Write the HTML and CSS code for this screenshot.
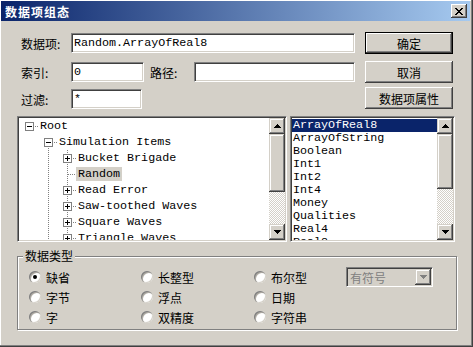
FILE: index.html
```html
<!DOCTYPE html>
<html lang="zh-CN">
<head>
    <meta charset="UTF-8">
    <meta name="viewport" content="width=device-width, initial-scale=1.0">
    <title>数据项组态</title>
    <link rel="stylesheet" href="styles.css">
</head>
<body>
    <div class="window">
        <div class="titlebar">
            <span class="title">数据项组态</span>
            <span class="close-btn">
                <svg width="8" height="7" viewBox="0 0 8 7" shape-rendering="crispEdges"><path d="M0 0h2v1h1v1h2V1h1V0h2v1H7v1H6v1H5v1h1v1h1v1h1v1H6V6H5V5H3v1H2v1H0V6h1V5h1V4h1V3H2V2H1V1H0z" fill="#000"/></svg>
            </span>
        </div>

        <div class="top">
            <div class="fields">
                <div class="row">
                    <span class="lbl">数据项:</span>
                    <div class="edit w-item">Random.ArrayOfReal8</div>
                </div>
                <div class="row row-2">
                    <span class="lbl">索引:</span>
                    <div class="edit w-index">0</div>
                    <span class="lbl lbl-path">路径:</span>
                    <div class="edit w-path"></div>
                </div>
                <div class="row row-3">
                    <span class="lbl">过滤:</span>
                    <div class="edit w-filter">*</div>
                </div>
            </div>
            <div class="buttons">
                <div class="btn default">确定</div>
                <div class="btn btn-2">取消</div>
                <div class="btn btn-3">数据项属性</div>
            </div>
        </div>

        <div class="middle">
            <div class="box tree">
                <div class="tree-items">
                    <div class="node lv1"><span class="exp"></span><span class="dash"></span><span class="text">Root</span></div>
                    <div class="node lv2"><span class="exp"></span><span class="dash"></span><span class="text">Simulation Items</span></div>
                    <div class="node lv3"><span class="exp plus"></span><span class="dash"></span><span class="text">Bucket Brigade</span></div>
                    <div class="node lv3"><span class="leaf"></span><span class="text selected">Random</span></div>
                    <div class="node lv3"><span class="exp plus"></span><span class="dash"></span><span class="text">Read Error</span></div>
                    <div class="node lv3"><span class="exp plus"></span><span class="dash"></span><span class="text">Saw-toothed Waves</span></div>
                    <div class="node lv3"><span class="exp plus"></span><span class="dash"></span><span class="text">Square Waves</span></div>
                    <div class="node lv3"><span class="exp plus"></span><span class="dash"></span><span class="text">Triangle Waves</span></div>
                </div>
                <div class="sbar">
                    <div class="sb-btn"><svg width="7" height="4" viewBox="0 0 7 4" shape-rendering="crispEdges"><path d="M3 0h1v1h1v1h1v1h1v1H0V3h1V2h1V1h1z"/></svg></div>
                    <div class="sb-thumb tree-thumb"></div>
                    <div class="sb-track"></div>
                    <div class="sb-btn"><svg width="7" height="4" viewBox="0 0 7 4" shape-rendering="crispEdges"><path d="M0 0h7v1H6v1H5v1H4v1H3V3H2V2H1V1H0z"/></svg></div>
                </div>
            </div>

            <div class="box list">
                <div class="list-items">
                    <div class="item selected">ArrayOfReal8</div>
                    <div class="item">ArrayOfString</div>
                    <div class="item">Boolean</div>
                    <div class="item">Int1</div>
                    <div class="item">Int2</div>
                    <div class="item">Int4</div>
                    <div class="item">Money</div>
                    <div class="item">Qualities</div>
                    <div class="item">Real4</div>
                    <div class="item">Real8</div>
                </div>
                <div class="sbar">
                    <div class="sb-btn"><svg width="7" height="4" viewBox="0 0 7 4" shape-rendering="crispEdges"><path d="M3 0h1v1h1v1h1v1h1v1H0V3h1V2h1V1h1z"/></svg></div>
                    <div class="sb-thumb list-thumb"></div>
                    <div class="sb-track"></div>
                    <div class="sb-btn"><svg width="7" height="4" viewBox="0 0 7 4" shape-rendering="crispEdges"><path d="M0 0h7v1H6v1H5v1H4v1H3V3H2V2H1V1H0z"/></svg></div>
                </div>
            </div>
        </div>

        <fieldset class="group">
            <legend>数据类型</legend>
            <div class="options">
                <div class="opt"><span class="radio checked"></span>缺省</div>
                <div class="opt"><span class="radio"></span>长整型</div>
                <div class="opt"><span class="radio"></span>布尔型</div>
                <div class="combo">
                    <span class="combo-text">有符号</span>
                    <span class="combo-btn"><svg width="7" height="4" viewBox="0 0 7 4" shape-rendering="crispEdges"><path d="M0 0h7v1H6v1H5v1H4v1H3V3H2V2H1V1H0z" fill="#808080"/></svg></span>
                </div>
                <div class="opt"><span class="radio"></span>字节</div>
                <div class="opt"><span class="radio"></span>浮点</div>
                <div class="opt"><span class="radio"></span>日期</div>
                <div></div>
                <div class="opt"><span class="radio"></span>字</div>
                <div class="opt"><span class="radio"></span>双精度</div>
                <div class="opt"><span class="radio"></span>字符串</div>
            </div>
        </fieldset>
    </div>
</body>
</html>
```

FILE: styles.css
```css
:root {
    --face: #d4d0c8;
    --light: #ffffff;
    --shadow: #808080;
    --dark: #404040;
    --select: #0a246a;
}

body {
    margin: 0;
    background-color: var(--face);
    font-family: "Noto Sans CJK SC", "Liberation Sans", sans-serif;
    font-size: 12px;
    color: #000;
}

.window {
    width: 473px;
    height: 347px;
    box-sizing: border-box;
    padding: 1px 2px 2px 1px;
    border-right: 1px solid var(--dark);
    border-bottom: 1px solid var(--dark);
    box-shadow: inset -1px -1px 0 var(--shadow), inset 1px 1px 0 var(--light);
    display: flex;
    flex-direction: column;
}

/* title bar */
.titlebar {
    height: 20px;
    display: flex;
    align-items: center;
    justify-content: space-between;
    padding: 0 3px 0 4px;
    background: linear-gradient(to right, #0a246a, #a6caf0);
    color: white;
}

.title {
    font-weight: bold;
    letter-spacing: 1px;
}

.close-btn {
    width: 16px;
    height: 14px;
    display: flex;
    align-items: center;
    justify-content: center;
    background-color: var(--face);
    box-shadow: inset -1px -1px 0 var(--dark), inset 1px 1px 0 var(--light), inset -2px -2px 0 var(--shadow);
}

/* top form */
.top {
    display: flex;
    margin-top: 11px;
    padding-left: 20px;
}

.fields {
    width: 334px;
}

.row {
    display: flex;
    align-items: center;
    height: 22px;
}

.row-2 {
    margin-top: 7px;
}

.row-3 {
    margin-top: 5px;
}

.lbl {
    width: 50px;
    flex-shrink: 0;
}

.lbl-path {
    width: 44px;
    margin-left: 6px;
}

.edit {
    height: 20px;
    box-sizing: border-box;
    background-color: white;
    border: 1px solid;
    border-color: var(--shadow) var(--light) var(--light) var(--shadow);
    box-shadow: inset 1px 1px 0 var(--dark), inset -1px -1px 0 var(--face);
    padding-left: 2px;
    font-family: "Liberation Mono", monospace;
    font-size: 11.7px;
    line-height: 18px;
    white-space: nowrap;
}

.w-item { width: 284px; }
.w-index { width: 73px; }
.w-path { width: 161px; }
.w-filter { width: 71px; }

.buttons {
    width: 88px;
    margin-left: 10px;
}

.btn {
    height: 22px;
    box-sizing: border-box;
    display: flex;
    align-items: center;
    justify-content: center;
    background-color: var(--face);
    box-shadow: inset -1px -1px 0 var(--dark), inset 1px 1px 0 var(--light), inset -2px -2px 0 var(--shadow);
}

.btn.default {
    border: 1px solid #000;
}

.btn-2 {
    margin-top: 7px;
}

.btn-3 {
    margin-top: 4px;
}

/* tree and list */
.middle {
    display: flex;
    gap: 3px;
    height: 126px;
    margin-top: 6px;
    padding-left: 16px;
}

.box {
    box-sizing: border-box;
    display: flex;
    padding: 1px;
    background-color: white;
    border: 1px solid;
    border-color: var(--shadow) var(--light) var(--light) var(--shadow);
    box-shadow: inset 1px 1px 0 var(--dark), inset -1px -1px 0 var(--face);
}

.tree { width: 270px; }
.list { width: 165px; }

.tree-items {
    flex: 1;
    overflow: hidden;
    font-family: "Liberation Mono", monospace;
    font-size: 11.7px;
    background-image:
        repeating-linear-gradient(to bottom, var(--shadow) 0 1px, transparent 1px 2px),
        repeating-linear-gradient(to bottom, var(--shadow) 0 1px, transparent 1px 2px);
    background-size: 1px 100%, 1px 100%;
    background-position: 29px 24px, 48px 32px;
    background-repeat: no-repeat;
}

.node {
    height: 16px;
    display: flex;
    align-items: center;
    white-space: nowrap;
}

.lv1 { padding-left: 6px; }
.lv2 { padding-left: 25px; }
.lv3 { padding-left: 44px; }

.exp {
    width: 9px;
    height: 9px;
    box-sizing: border-box;
    border: 1px solid var(--shadow);
    background-color: white;
    position: relative;
    flex-shrink: 0;
}

.exp::before {
    content: "";
    position: absolute;
    left: 1px;
    top: 3px;
    width: 5px;
    height: 1px;
    background-color: #000;
}

.exp.plus::after {
    content: "";
    position: absolute;
    left: 3px;
    top: 1px;
    width: 1px;
    height: 5px;
    background-color: #000;
}

.dash {
    width: 4px;
    height: 1px;
    background-image: repeating-linear-gradient(to right, var(--shadow) 0 1px, transparent 1px 2px);
    background-position: 1px 0;
}

.leaf {
    width: 9px;
    height: 1px;
    margin-left: 4px;
    background-image: repeating-linear-gradient(to right, var(--shadow) 0 1px, transparent 1px 2px);
    background-position: 1px 0;
}

.text {
    padding: 0 2px;
    line-height: 14px;
    background-color: white;
}

.text.selected {
    background-color: var(--face);
}

.list-items {
    flex: 1;
    overflow: hidden;
    padding-top: 1px;
    font-family: "Liberation Mono", monospace;
    font-size: 11.7px;
}

.item {
    height: 13px;
    line-height: 13px;
    padding-left: 1px;
    white-space: nowrap;
}

.item.selected {
    background-color: var(--select);
    color: white;
}

/* scrollbars */
.sbar {
    width: 16px;
    display: flex;
    flex-direction: column;
}

.sb-btn,
.sb-thumb {
    background-color: var(--face);
    box-shadow: inset -1px -1px 0 var(--dark), inset 1px 1px 0 var(--face), inset -2px -2px 0 var(--shadow), inset 2px 2px 0 var(--light);
}

.sb-btn {
    height: 16px;
    display: flex;
    align-items: center;
    justify-content: center;
}

.tree-thumb { height: 58px; }
.list-thumb { height: 55px; }

.sb-track {
    flex: 1;
    background-image: conic-gradient(var(--light) 25%, var(--face) 0 50%, var(--light) 0 75%, var(--face) 0);
    background-size: 2px 2px;
}

/* group box */
.group {
    width: 440px;
    box-sizing: border-box;
    margin: 7px 0 0 16px;
    padding: 0 0 2px 0;
    border: 1px solid var(--shadow);
    box-shadow: inset 1px 1px 0 var(--light), 1px 1px 0 var(--light);
}

.group legend {
    margin-left: 5px;
    padding: 0 2px;
    line-height: 14px;
    background-color: var(--face);
}

.options {
    display: grid;
    grid-template-columns: 112px 113px 92px 87px;
    grid-auto-rows: 20px;
    align-items: center;
    padding: 4px 0 0 11px;
}

.opt {
    display: flex;
    align-items: center;
    white-space: nowrap;
}

.radio {
    width: 12px;
    height: 12px;
    border-radius: 50%;
    margin-right: 5px;
    background-color: white;
    box-shadow: inset 1px 1px 0 var(--shadow), inset 2px 2px 0 #b0aca4, inset -1px -1px 0 var(--face);
    display: flex;
    align-items: center;
    justify-content: center;
}

.radio.checked::after {
    content: "";
    width: 4px;
    height: 4px;
    border-radius: 50%;
    background-color: #000;
}

.combo {
    width: 87px;
    height: 20px;
    box-sizing: border-box;
    display: flex;
    align-items: center;
    padding: 1px;
    border: 1px solid;
    border-color: var(--shadow) var(--light) var(--light) var(--shadow);
    box-shadow: inset 1px 1px 0 var(--dark), inset -1px -1px 0 var(--face);
}

.combo-text {
    flex: 1;
    padding-left: 2px;
    color: var(--shadow);
}

.combo-btn {
    width: 16px;
    height: 16px;
    display: flex;
    align-items: center;
    justify-content: center;
    box-shadow: inset -1px -1px 0 var(--dark), inset 1px 1px 0 var(--face), inset -2px -2px 0 var(--shadow), inset 2px 2px 0 var(--light);
}
```
